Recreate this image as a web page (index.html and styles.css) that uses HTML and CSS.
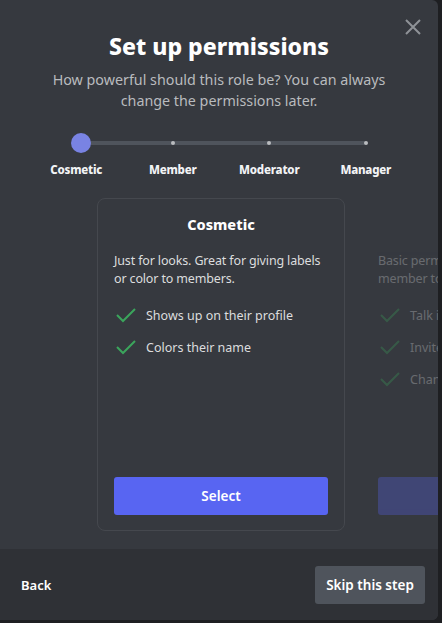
FILE: index.html
```html
<!DOCTYPE html>
<html lang="en">
<head>
<meta charset="utf-8">
<title>Set up permissions</title>
<link rel="stylesheet" href="styles.css">
</head>
<body>
<div class="modal">
  <button class="close" aria-label="Close">
    <svg width="18" height="18" viewBox="0 0 18 18"><path d="M2 2 L16 16 M16 2 L2 16" stroke="#8e9297" stroke-width="2" fill="none"/></svg>
  </button>
  <div class="content">
    <h1 class="title">Set up permissions</h1>
    <p class="subtitle">How powerful should this role be? You can always change the permissions later.</p>

    <div class="slider">
      <div class="track"></div>
      <div class="marks">
        <span class="cell"><span class="knob"></span></span>
        <span class="cell"><span class="dot"></span></span>
        <span class="cell"><span class="dot"></span></span>
        <span class="cell"><span class="dot"></span></span>
      </div>
      <div class="labels">
        <span>Cosmetic</span>
        <span>Member</span>
        <span>Moderator</span>
        <span>Manager</span>
      </div>
    </div>

    <div class="cards">
      <div class="card">
        <h2 class="card-title">Cosmetic</h2>
        <p class="card-desc">Just for looks. Great for giving labels or color to members.</p>
        <ul class="perks">
          <li><svg class="check" width="24" height="24" viewBox="0 0 24 24"><path d="M3 12 L9 18 L21 6" stroke="#3ba55c" stroke-width="2" fill="none"/></svg>Shows up on their profile</li>
          <li><svg class="check" width="24" height="24" viewBox="0 0 24 24"><path d="M3 12 L9 18 L21 6" stroke="#3ba55c" stroke-width="2" fill="none"/></svg>Colors their name</li>
        </ul>
        <button class="select">Select</button>
      </div>
      <div class="card faded">
        <h2 class="card-title">Member</h2>
        <p class="card-desc">Basic permissions for allowing a member to participate in the server.</p>
        <ul class="perks">
          <li><svg class="check" width="24" height="24" viewBox="0 0 24 24"><path d="M3 12 L9 18 L21 6" stroke="#3ba55c" stroke-width="2" fill="none"/></svg>Talk in channels</li>
          <li><svg class="check" width="24" height="24" viewBox="0 0 24 24"><path d="M3 12 L9 18 L21 6" stroke="#3ba55c" stroke-width="2" fill="none"/></svg>Invite friends</li>
          <li><svg class="check" width="24" height="24" viewBox="0 0 24 24"><path d="M3 12 L9 18 L21 6" stroke="#3ba55c" stroke-width="2" fill="none"/></svg>Change nickname</li>
        </ul>
        <button class="select">Select</button>
      </div>
    </div>
  </div>
  <div class="footer">
    <button class="back">Back</button>
    <button class="skip">Skip this step</button>
  </div>
</div>
</body>
</html>
```
FILE: styles.css
```css
* { box-sizing: border-box; }
html, body { margin: 0; padding: 0; }
body {
  background: #1e1f22;
  font-family: "Noto Sans", "Open Sans", sans-serif;
  width: 442px;
  height: 623px;
  overflow: hidden;
}
.modal {
  position: relative;
  width: 438px;
  height: 620px;
  background: #36393f;
  border-radius: 0 6px 6px 0;
  display: flex;
  flex-direction: column;
  overflow: hidden;
}
.close {
  position: absolute;
  top: 18px;
  right: 16px;
  width: 18px;
  height: 18px;
  padding: 0;
  border: 0;
  background: none;
  display: flex;
}
.content {
  flex: 1;
  padding-top: 31px;
  overflow: hidden;
}
.title {
  margin: 0;
  text-align: center;
  color: #ffffff;
  font-family: "Noto Sans", sans-serif;
  font-weight: 800;
  font-size: 23px;
  line-height: 30px;
  letter-spacing: 0;
}
.subtitle {
  margin: 8px auto 0;
  width: 350px;
  text-align: center;
  color: #b9bbbe;
  font-size: 14.3px;
  line-height: 21px;
}
.slider {
  position: relative;
  margin: 22px 24px 0 28px;
}
.track {
  position: absolute;
  left: 48px;
  right: 48px;
  top: 8px;
  height: 4px;
  border-radius: 2px;
  background: #4f545c;
}
.marks {
  position: relative;
  display: grid;
  grid-template-columns: repeat(4, 1fr);
  height: 20px;
}
.cell {
  display: flex;
  justify-content: center;
  align-items: center;
}
.knob {
  width: 20px;
  height: 20px;
  border-radius: 50%;
  background: #7983e3;
  margin-left: 10px;
}
.dot {
  width: 4px;
  height: 4px;
  border-radius: 50%;
  background: #b9bbbe;
}
.labels {
  display: grid;
  grid-template-columns: repeat(4, 1fr);
  margin-top: 9px;
  text-align: center;
  color: #f2f3f5;
  font-weight: 800;
  font-size: 11.5px;
  line-height: 16px;
  letter-spacing: -0.2px;
}
.cards {
  display: flex;
  gap: 16px;
  margin-top: 20px;
  padding-left: 97px;
}
.card {
  flex: 0 0 248px;
  height: 333px;
  border: 1px solid #45484e;
  border-radius: 8px;
  padding: 15px 16px 15px;
  display: flex;
  flex-direction: column;
}
.card.faded { opacity: 0.3; border-color: transparent; }
.card-title {
  margin: 0;
  text-align: center;
  color: #ffffff;
  font-weight: 800;
  font-size: 14.5px;
  line-height: 20px;
}
.card-desc {
  margin: 18px 0 0;
  color: #dcddde;
  font-size: 12.5px;
  line-height: 18px;
  letter-spacing: -0.15px;
}
.perks {
  list-style: none;
  margin: 15px 0 0;
  padding: 0;
  display: flex;
  flex-direction: column;
  gap: 8px;
}
.perks li {
  display: flex;
  align-items: center;
  gap: 8px;
  height: 24px;
  color: #dcddde;
  font-size: 12.5px;
  white-space: nowrap;
}
.check { flex: none; }
.select {
  margin-top: auto;
  height: 38px;
  width: 100%;
  border: 0;
  border-radius: 3px;
  background: #5865f2;
  color: #ffffff;
  font-family: inherit;
  font-weight: 600;
  font-size: 13.5px;
}
.footer {
  height: 71px;
  background: #2f3136;
  display: flex;
  align-items: center;
  justify-content: space-between;
  padding: 0 13px 0 21px;
}
.back {
  border: 0;
  background: none;
  padding: 0;
  color: #ffffff;
  font-family: inherit;
  font-weight: 600;
  font-size: 13px;
}
.skip {
  width: 110px;
  height: 38px;
  border: 0;
  border-radius: 3px;
  background: #4f545c;
  color: #ffffff;
  font-family: inherit;
  font-weight: 600;
  font-size: 13.5px;
}
```
